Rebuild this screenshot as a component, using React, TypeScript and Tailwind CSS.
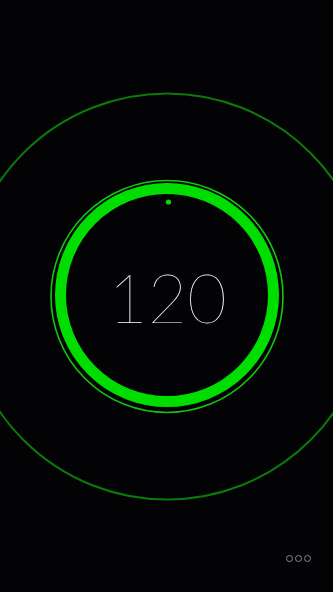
export default function App() {
    return (
        <div className="relative w-[333px] h-[592px] overflow-hidden bg-[#030205]">
            {/* gauge rings */}
            <svg className="absolute inset-0" width="333" height="592" viewBox="0 0 333 592">
                <circle cx="167" cy="296.5" r="203" fill="none" stroke="#0b7a0b" strokeWidth="2" />
                <circle cx="167" cy="296.5" r="116" fill="none" stroke="#11c811" strokeWidth="1.6" />
                <circle cx="167" cy="295" r="106.5" fill="none" stroke="#00dd00" strokeWidth="11" />
                <circle cx="168.5" cy="202" r="2.6" fill="#00dd00" />
            </svg>

            <div className="absolute inset-0 flex items-center justify-center">
                <span className="text-white text-[68px] font-thin leading-none mt-[2px] ml-[2px] font-['Lato','Liberation_Sans',sans-serif]">
                    120
                </span>
            </div>

            {/* page dots */}
            <div className="absolute right-[22px] bottom-[30px] flex gap-[2px]">
                <span className="w-[7px] h-[7px] rounded-full border border-[#8a8a8a]" />
                <span className="w-[7px] h-[7px] rounded-full border border-[#8a8a8a]" />
                <span className="w-[7px] h-[7px] rounded-full border border-[#8a8a8a]" />
            </div>
        </div>
    );
}
